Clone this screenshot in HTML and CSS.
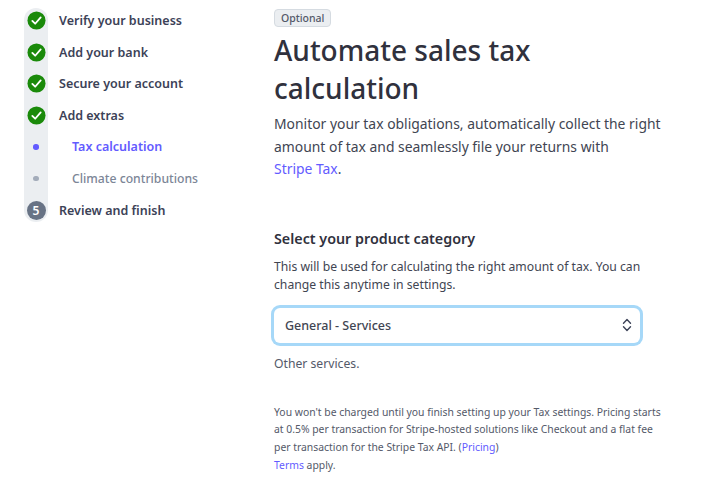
FILE: index.html
```html
<!DOCTYPE html>
<html lang="en">
<head>
<meta charset="utf-8">
<title>Automate sales tax calculation</title>
<link rel="stylesheet" href="styles.css">
</head>
<body>
<div class="page">
  <nav class="steps">
    <div class="step"><span class="mark"><svg class="check" viewBox="0 0 20 20"><circle cx="10" cy="10" r="9.5" fill="#1a8a0a"/><path d="M5.6 10.4l3 3 5.8-6.6" fill="none" stroke="#fff" stroke-width="1.9" stroke-linecap="round" stroke-linejoin="round"/></svg></span><span class="label">Verify your business</span></div>
    <div class="step"><span class="mark"><svg class="check" viewBox="0 0 20 20"><circle cx="10" cy="10" r="9.5" fill="#1a8a0a"/><path d="M5.6 10.4l3 3 5.8-6.6" fill="none" stroke="#fff" stroke-width="1.9" stroke-linecap="round" stroke-linejoin="round"/></svg></span><span class="label">Add your bank</span></div>
    <div class="step"><span class="mark"><svg class="check" viewBox="0 0 20 20"><circle cx="10" cy="10" r="9.5" fill="#1a8a0a"/><path d="M5.6 10.4l3 3 5.8-6.6" fill="none" stroke="#fff" stroke-width="1.9" stroke-linecap="round" stroke-linejoin="round"/></svg></span><span class="label">Secure your account</span></div>
    <div class="step"><span class="mark"><svg class="check" viewBox="0 0 20 20"><circle cx="10" cy="10" r="9.5" fill="#1a8a0a"/><path d="M5.6 10.4l3 3 5.8-6.6" fill="none" stroke="#fff" stroke-width="1.9" stroke-linecap="round" stroke-linejoin="round"/></svg></span><span class="label">Add extras</span></div>
    <div class="step sub active"><span class="mark"><i class="dot"></i></span><span class="label">Tax calculation</span></div>
    <div class="step sub pending"><span class="mark"><i class="dot"></i></span><span class="label">Climate contributions</span></div>
    <div class="step"><span class="mark"><span class="num">5</span></span><span class="label">Review and finish</span></div>
  </nav>
  <main class="content">
    <span class="badge">Optional</span>
    <h1 class="title">Automate sales tax calculation</h1>
    <p class="lead">Monitor your tax obligations, automatically collect the right amount of tax and seamlessly file your returns with <a class="link nowrap" href="#">Stripe Tax</a>.</p>
    <h2 class="subtitle">Select your product category</h2>
    <p class="desc">This will be used for calculating the right amount of tax. You can change this anytime in settings.</p>
    <div class="select">
      <span>General - Services</span>
      <svg class="chev" viewBox="0 0 10 14"><path d="M1.5 5.2L5 1.6l3.5 3.6M1.5 8.8L5 12.4l3.5-3.6" fill="none" stroke="#3c4257" stroke-width="1.4" stroke-linecap="round" stroke-linejoin="round"/></svg>
    </div>
    <p class="hint">Other services.</p>
    <p class="fine">You won't be charged until you finish setting up your Tax settings. Pricing starts at 0.5% per transaction for Stripe-hosted solutions like Checkout and a flat fee per transaction for the Stripe Tax API. (<a class="link" href="#">Pricing</a>)<br><a class="link" href="#">Terms</a> apply.</p>
  </main>
</div>
</body>
</html>
```
FILE: styles.css
```css
* { box-sizing: border-box; }
html, body { margin: 0; height: 100%; background: #fff; overflow: hidden; }
body { font-family: "Noto Sans", "Open Sans", sans-serif; color: #3c4257; }
.page { display: flex; align-items: flex-start; }
.steps {
  position: relative;
  isolation: isolate;
  margin: 5px 0 0 24px;
  width: 200px;
  display: flex;
  flex-direction: column;
}
.steps::before {
  content: "";
  position: absolute;
  z-index: -1;
  left: 0;
  top: 3px;
  bottom: 4px;
  width: 24px;
  border-radius: 12px;
  background: #ebeef1;
}
.step { display: flex; align-items: center; height: 31.55px; }
.mark { width: 24px; flex: none; display: flex; align-items: center; justify-content: center; }
.check { width: 19px; height: 19px; display: block; }
.label { margin-left: 11px; font-size: 12.5px; font-weight: 600; color: #3c4257; white-space: nowrap; }
.sub .label { margin-left: 24px; }
.dot { width: 5.5px; height: 5.5px; border-radius: 50%; display: block; }
.active .dot { background: #635bff; }
.active .label { color: #635bff; }
.pending .dot { background: #a3acba; }
.pending .label { color: #7c8697; font-size: 12.2px; font-weight: 500; }
.num { width: 19px; height: 19px; border-radius: 50%; background: #687385; color: #fff; font-size: 12px; font-weight: 600; display: flex; align-items: center; justify-content: center; }
.content { margin-left: 50px; width: 392px; padding-top: 9px; }
.badge { display: block; width: fit-content; height: 18px; line-height: 16px; padding: 0 6px; font-size: 10.5px; font-weight: 500; color: #545969; background: #ebeef1; border: 1px solid #d5dbe1; border-radius: 4px; }
.title { margin: 4px 0 0; font-size: 28px; line-height: 38px; font-weight: 500; color: #30313d; }
.lead { margin: 6px 0 0; font-size: 13.9px; line-height: 22.5px; color: #414552; }
.link { color: #635bff; text-decoration: none; }
.nowrap { white-space: nowrap; }
.subtitle { margin: 48px 0 0; font-size: 14.3px; line-height: 20px; font-weight: 600; color: #30313d; }
.desc { margin: 9px 0 0; font-size: 12.2px; line-height: 18.5px; color: #414552; width: 370px; }
.select { margin-top: 13px; width: 366px; height: 35px; padding: 0 8px 0 11px; display: flex; align-items: center; justify-content: space-between; border-radius: 6px; background: #fff; box-shadow: 0 0 0 3px #a6d8f8, 0 1px 2px rgba(0,0,0,.1); font-size: 12.5px; font-weight: 500; color: #414552; }
.chev { width: 10px; height: 14px; display: block; }
.hint { margin: 12px 0 0; font-size: 12.2px; line-height: 18px; color: #545969; }
.fine { margin: 31px 0 0; font-size: 10.38px; line-height: 17.7px; color: #545969; }
```
